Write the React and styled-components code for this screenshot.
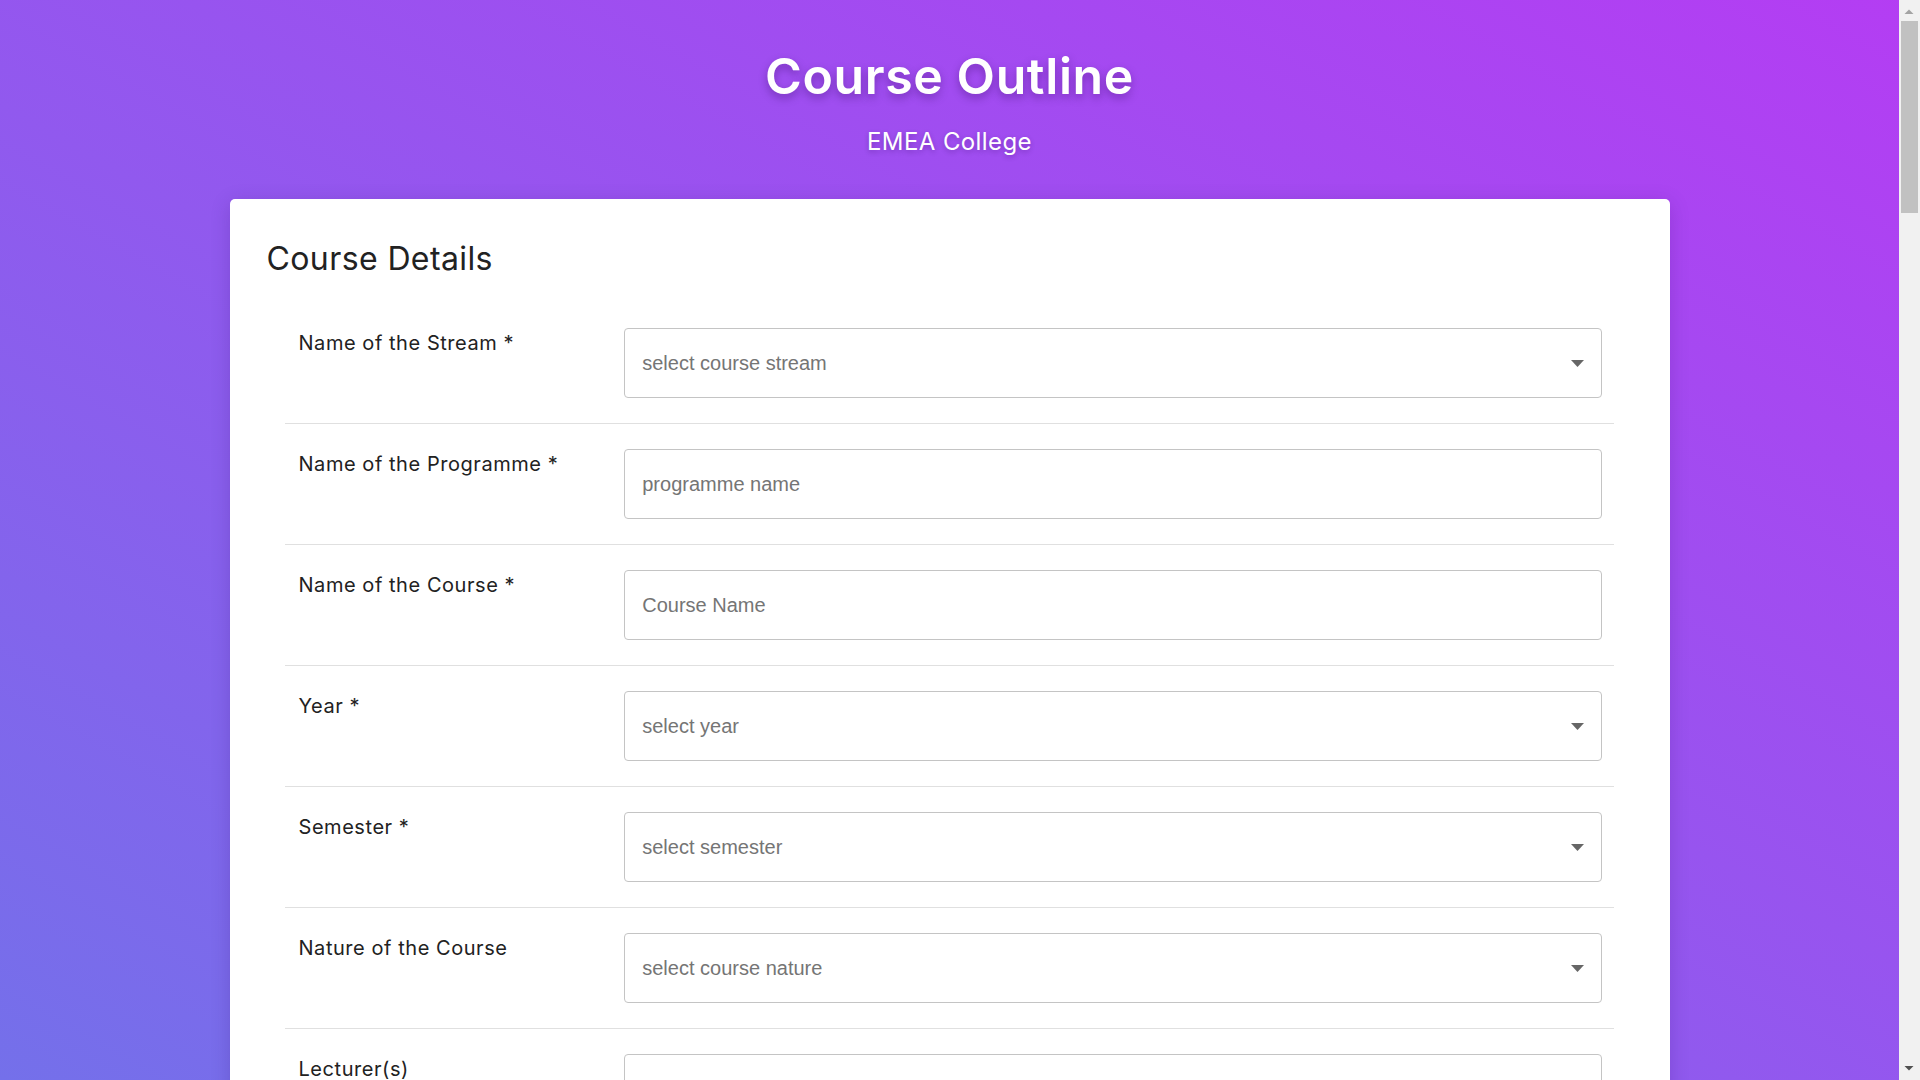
import React from "react";
import styled, { createGlobalStyle } from "styled-components";

const GlobalStyle = createGlobalStyle`
  * { box-sizing: border-box; }
  html, body { height: 100%; overflow: hidden; }
  body {
    margin: 0;
    font-family: Inter, "Noto Sans", sans-serif;
    color: #222;
    background: linear-gradient(to top right, #7470ea 0%, #b43df3 100%);
  }
`;

const sections = [
  {
    title: "Course Details",
    fields: [
      { label: "Name of the Stream *", type: "select", placeholder: "select course stream" },
      { label: "Name of the Programme *", type: "input", placeholder: "programme name" },
      { label: "Name of the Course *", type: "input", placeholder: "Course Name" },
      { label: "Year *", type: "select", placeholder: "select year" },
      { label: "Semester *", type: "select", placeholder: "select semester" },
      { label: "Nature of the Course", type: "select", placeholder: "select course nature" },
      { label: "Lecturer(s)", type: "input", placeholder: "lecturer name(s)" },
      { label: "Course Code", type: "input", placeholder: "course code" },
      { label: "Credits", type: "input", placeholder: "credits" },
    ],
  },
  {
    title: "Course Outcomes",
    fields: [1, 2, 3, 4, 5, 6].map((n) => ({
      label: `CO${n}`,
      type: "input",
      placeholder: `course outcome ${n}`,
    })),
  },
];

const App = () => {
  return (
    <Shell>
      <GlobalStyle />
      <Main>
        <Header>
          <Title>Course Outline</Title>
          <Subtitle>EMEA College</Subtitle>
        </Header>

        {sections.map((section) => (
          <Card key={section.title}>
            <CardTitle>{section.title}</CardTitle>
            <Form>
              {section.fields.map((f) => (
                <Row key={f.label}>
                  <Label>{f.label}</Label>
                  {f.type === "select" && (
                    <SelectWrap>
                      <Select defaultValue="">
                        <option value="" disabled>
                          {f.placeholder}
                        </option>
                      </Select>
                      <Arrow width="13" height="7" viewBox="0 0 13 7">
                        <path d="M0 0h13L6.5 7z" fill="#666" />
                      </Arrow>
                    </SelectWrap>
                  )}
                  {f.type === "input" && <Input placeholder={f.placeholder} />}
                </Row>
              ))}
            </Form>
          </Card>
        ))}
      </Main>

      <ScrollBar>
        <ScrollButton>
          <svg width="21" height="17" viewBox="0 0 21 17">
            <path d="M5.5 14h9L10 9.5z" fill="#a3a3a3" />
          </svg>
        </ScrollButton>
        <Track>
          <Thumb />
        </Track>
        <ScrollButton>
          <svg width="21" height="17" viewBox="0 0 21 17">
            <path d="M5.5 3h9L10 7.5z" fill="#505050" />
          </svg>
        </ScrollButton>
      </ScrollBar>
    </Shell>
  );
};

export default App;

const Shell = styled.div`
  display: flex;
  height: 100vh;
  overflow: hidden;
`;

const Main = styled.main`
  flex: 1;
  min-width: 0;
  overflow: hidden;
  padding-top: 46px;
`;

const ScrollBar = styled.div`
  width: 21px;
  flex-shrink: 0;
  display: flex;
  flex-direction: column;
  background: #f1f1f1;
`;

const ScrollButton = styled.div`
  height: 17px;
  svg {
    display: block;
  }
`;

const Track = styled.div`
  flex: 1;
  padding: 4px 2px 0 2px;
`;

const Thumb = styled.div`
  height: 192px;
  background: #c1c1c1;
`;

const Header = styled.header`
  text-align: center;
  color: white;
  margin-bottom: 42px;
`;

const Title = styled.h1`
  margin: 0;
  font-size: 50px;
  line-height: 60px;
  font-weight: 600;
  letter-spacing: 0.6px;
  text-shadow: 0 4px 8px rgba(40, 0, 80, 0.35);
`;

const Subtitle = styled.p`
  margin: 21px 0 0;
  font-size: 24px;
  line-height: 30px;
  font-weight: 400;
  letter-spacing: 0.4px;
  text-shadow: 0 2px 5px rgba(40, 0, 80, 0.3);
`;

const Card = styled.section`
  width: 1440px;
  margin: 0 auto 40px;
  background: #fff;
  border-radius: 5px;
  padding: 41px 37px 40px;
  box-shadow: 0 4px 20px rgba(40, 0, 90, 0.18);
`;

const CardTitle = styled.h2`
  margin: 0 0 25px;
  font-size: 32px;
  line-height: 38px;
  font-weight: 400;
  letter-spacing: 0.4px;
  color: #222;
`;

const Form = styled.div`
  margin: 0 19px 0 18px;
`;

const Row = styled.div`
  display: grid;
  grid-template-columns: 25% 75%;
  align-items: start;
  padding: 25px 12px 25px 14px;
  border-bottom: 1px solid #e0e0e0;
`;

const Label = styled.label`
  font-size: 20px;
  line-height: 30px;
  letter-spacing: 0.55px;
  color: #222;
`;

const fieldBase = `
  width: 100%;
  border: 1px solid #c4c4c4;
  border-radius: 4px;
  background: #fff;
  font-family: "Liberation Sans", Arial, sans-serif;
  font-size: 20px;
  color: #333;
  padding: 0 17px;
  outline: none;
  &::placeholder { color: #757575; }
`;

const Input = styled.input`
  ${fieldBase}
  height: 70px;
`;

const SelectWrap = styled.div`
  position: relative;
`;

const Select = styled.select`
  ${fieldBase}
  height: 70px;
  appearance: none;
  color: #757575;
`;

const Arrow = styled.svg`
  position: absolute;
  right: 18px;
  top: 32px;
  pointer-events: none;
`;
